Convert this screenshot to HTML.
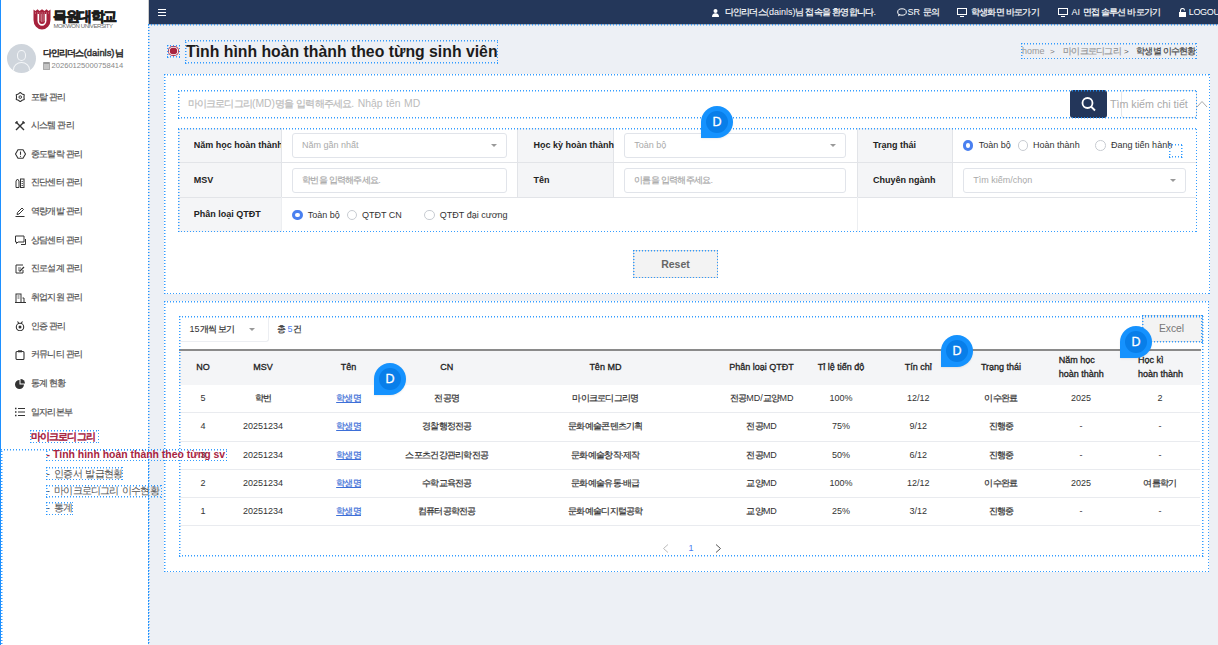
<!DOCTYPE html><html><head><meta charset="utf-8"><style>
*{box-sizing:border-box;margin:0;padding:0}
html,body{width:1218px;height:645px;overflow:hidden}
body{position:relative;background:#edf0f5;font-family:"Liberation Sans",sans-serif;color:#333}
div{position:absolute}
.t{white-space:nowrap}
.k{letter-spacing:-0.08em;-webkit-text-stroke-width:0.2px}
.nk .k{-webkit-text-stroke-width:0.05px}
.bk .k{-webkit-text-stroke-width:0.55px}
svg{display:block}
.db{pointer-events:none;z-index:5;
background:
 repeating-linear-gradient(90deg,rgba(30,146,255,0.9) 0 1.2px,transparent 1.2px 3px) left top/100% 1.5px no-repeat,
 repeating-linear-gradient(90deg,rgba(30,146,255,0.9) 0 1.2px,transparent 1.2px 3px) left bottom/100% 1.5px no-repeat,
 repeating-linear-gradient(0deg,rgba(30,146,255,0.9) 0 1.2px,transparent 1.2px 3px) left top/1.5px 100% no-repeat,
 repeating-linear-gradient(0deg,rgba(30,146,255,0.9) 0 1.2px,transparent 1.2px 3px) right top/1.5px 100% no-repeat;}
.badge{width:32px;height:32px;border-radius:16px 16px 16px 0;background:#1592fe;z-index:10;box-shadow:0 1px 2px rgba(0,0,0,.08)}
.badge::before{content:"";position:absolute;left:5px;top:5px;width:22px;height:22px;border-radius:50%;background:#087ee9}
.badge::after{content:"D";position:absolute;left:0;top:0;width:32px;height:32px;text-align:center;line-height:32px;color:#fff;font-size:12.5px;font-weight:400;-webkit-text-stroke:0.3px #fff}
</style></head><body><div style="left:0;top:0;width:148px;height:645px;background:#fff"></div>
<div style="left:0;top:0;width:1px;height:645px;background:#1e90ff;z-index:6"></div>
<div style="left:33px;top:9px;width:18px;height:21px">
<svg width="18" height="21" viewBox="0 0 18 21"><path d="M0.5 0.5 L2.5 2 L4.5 0.3 L6.5 2 L9 0.3 L11.5 2 L13.5 0.3 L15.5 2 L17.5 0.5 L17.5 11 A8.5 9.5 0 0 1 0.5 11 Z" fill="#a6213c"/>
<path d="M4.5 5 L4.5 11.5 A4.5 5.2 0 0 0 13.5 11.5 L13.5 5 L12 5 L12 11.5 A3 3.5 0 0 1 6 11.5 L6 5 Z" fill="#fff"/>
<path d="M7 5 v7 M8.5 5 v8 M10 5 v8 M11.3 5 v7" stroke="#fff" stroke-width="0.6" opacity=".6"/>
<path d="M2 4 h14" stroke="#fff" stroke-width="0.7" stroke-dasharray="1 1.2" opacity=".8"/>
</svg></div>
<div class="t " style="left:53.2px;top:8.00px;font-size:14px;line-height:16px;font-weight:700;color:#1d1d1d;letter-spacing:-1.55px;-webkit-text-stroke:0.7px #1d1d1d;">목원대학교</div>
<div class="t " style="left:53.5px;top:22.90px;font-size:6px;line-height:7px;font-weight:400;color:#666;letter-spacing:-0.4px;font-family:"Liberation Serif",serif;">MOKWON UNIVERSITY</div>
<div style="left:7px;top:44px;width:29px;height:29px;border-radius:50%;background:#cfd5dc;overflow:hidden"><div style="left:9.8px;top:6.2px;width:9.4px;height:10.6px;border-radius:50%;border:1.1px solid #f4f6f8"></div><div style="left:5.6px;top:17.8px;width:17.8px;height:16px;border-radius:50%;border:1.1px solid #f4f6f8"></div></div>
<div class="t bk" style="left:42.5px;top:45.80px;font-size:9.4px;line-height:13.4px;font-weight:400;color:#333;-webkit-text-stroke:0.45px #333;"><span class="k">다인리더스</span>(dainls)<span class="k">님</span></div>
<div style="left:42.5px;top:62px;width:7.5px;height:8px;background:#c4c4c4;border:0.8px solid #aaa;border-top:2px solid #999;border-radius:1px"></div>
<div class="t " style="left:51.5px;top:60.20px;font-size:7.6px;line-height:11.6px;font-weight:400;color:#888;">20260125000758414</div>
<div class="t " style="left:30.7px;top:90.50px;font-size:9px;line-height:13px;font-weight:400;color:#555;"><span class="k">포탈 관리</span></div>
<div class="ic" style="left:15px;top:92.0px;width:10px;height:10px"><svg width="11" height="10" viewBox="0 0 11 10"><path d="M5.25 0.50 L7.10 1.90 L9.23 2.80 L8.95 5.10 L9.23 7.40 L7.10 8.30 L5.25 9.70 L3.40 8.30 L1.27 7.40 L1.55 5.10 L1.27 2.80 L3.40 1.90Z" fill="none" stroke="#333" stroke-width="1.1" stroke-linejoin="round"/><circle cx="5.25" cy="5.1" r="1.3" fill="none" stroke="#333" stroke-width="1"/></svg></div>
<div class="t " style="left:30.7px;top:119.15px;font-size:9px;line-height:13px;font-weight:400;color:#555;"><span class="k">시스템 관리</span></div>
<div class="ic" style="left:15px;top:120.7px;width:10px;height:10px"><svg width="10" height="10" viewBox="0 0 10 10"><path d="M1 9 L9 1 M1 1 L9 9" stroke="#333" stroke-width="1.4"/><path d="M0.5 2.5 L2.5 .5" stroke="#333" stroke-width="1.6"/><path d="M7.5 .5 L9.5 2.5" stroke="#333" stroke-width="1.6"/></svg></div>
<div class="t " style="left:30.7px;top:147.80px;font-size:9px;line-height:13px;font-weight:400;color:#555;"><span class="k">중도탈락 관리</span></div>
<div class="ic" style="left:15px;top:149.3px;width:10px;height:10px"><svg width="11" height="10" viewBox="0 0 11 10"><path d="M3 .7 H8 L10.5 5 L8 9.3 H3 L.5 5Z" fill="none" stroke="#333" stroke-width="1.1"/><path d="M5.5 2.5 V5.8" stroke="#333" stroke-width="1.1"/><circle cx="5.5" cy="7.3" r=".6" fill="#333"/></svg></div>
<div class="t " style="left:30.7px;top:176.45px;font-size:9px;line-height:13px;font-weight:400;color:#555;"><span class="k">진단센터 관리</span></div>
<div class="ic" style="left:15px;top:177.9px;width:10px;height:10px"><svg width="10" height="10" viewBox="0 0 10 10"><path d="M1 3 L2.5 1 L4 3 V9.5 H1Z" fill="none" stroke="#333" stroke-width="1"/><rect x="5.5" y="1" width="3.5" height="8.5" fill="none" stroke="#333" stroke-width="1"/><path d="M6.5 3.5h1.5M6.5 5.5h1.5M6.5 7.5h1.5" stroke="#333" stroke-width=".8"/></svg></div>
<div class="t " style="left:30.7px;top:205.10px;font-size:9px;line-height:13px;font-weight:400;color:#555;"><span class="k">역량개발 관리</span></div>
<div class="ic" style="left:15px;top:206.6px;width:10px;height:10px"><svg width="10" height="10" viewBox="0 0 10 10"><path d="M2 7.5 L2.5 5.5 L7 1 L8.5 2.5 L4 7 Z" fill="none" stroke="#333" stroke-width="1"/><path d="M0.5 9.5 H9.5" stroke="#333" stroke-width="1"/></svg></div>
<div class="t " style="left:30.7px;top:233.75px;font-size:9px;line-height:13px;font-weight:400;color:#555;"><span class="k">상담센터 관리</span></div>
<div class="ic" style="left:15px;top:235.2px;width:10px;height:10px"><svg width="11" height="10" viewBox="0 0 11 10"><path d="M.5 1 H9 V7 H3 L1.5 8.5 V7 H.5Z" fill="none" stroke="#333" stroke-width="1"/><path d="M10.5 4 V9.5 H6" fill="none" stroke="#333" stroke-width="1"/></svg></div>
<div class="t " style="left:30.7px;top:262.40px;font-size:9px;line-height:13px;font-weight:400;color:#555;"><span class="k">진로설계 관리</span></div>
<div class="ic" style="left:15px;top:263.9px;width:10px;height:10px"><svg width="10" height="10" viewBox="0 0 10 10"><path d="M8 1 H1 V9 H8 V6" fill="none" stroke="#333" stroke-width="1"/><path d="M3 4 h3 M3 6 h2" stroke="#333" stroke-width=".8"/><path d="M4.5 7.5 L9 3" stroke="#333" stroke-width="1.2"/></svg></div>
<div class="t " style="left:30.7px;top:291.05px;font-size:9px;line-height:13px;font-weight:400;color:#555;"><span class="k">취업지원 관리</span></div>
<div class="ic" style="left:15px;top:292.5px;width:10px;height:10px"><svg width="11" height="10" viewBox="0 0 11 10"><rect x="1" y="1" width="5" height="8.5" fill="none" stroke="#333" stroke-width="1"/><path d="M2.5 3h2M2.5 5h2" stroke="#333" stroke-width=".8"/><path d="M7.5 5 h1.5 V9.5" fill="none" stroke="#333" stroke-width="1"/><path d="M0 9.5h11" stroke="#333" stroke-width="1"/></svg></div>
<div class="t " style="left:30.7px;top:319.70px;font-size:9px;line-height:13px;font-weight:400;color:#555;"><span class="k">인증 관리</span></div>
<div class="ic" style="left:15px;top:321.2px;width:10px;height:10px"><svg width="10" height="10" viewBox="0 0 10 10"><circle cx="5" cy="6" r="3.7" fill="none" stroke="#333" stroke-width="1.1"/><circle cx="5" cy="6" r="1.5" fill="#333"/><path d="M2.5 .5 L4 2.5 M7.5 .5 L6 2.5" stroke="#333" stroke-width="1.1"/></svg></div>
<div class="t " style="left:30.7px;top:348.35px;font-size:9px;line-height:13px;font-weight:400;color:#555;"><span class="k">커뮤니티 관리</span></div>
<div class="ic" style="left:15px;top:349.8px;width:10px;height:10px"><svg width="10" height="10" viewBox="0 0 10 10"><rect x="1" y="1.5" width="8" height="8" rx="1" fill="none" stroke="#333" stroke-width="1.1"/><rect x="3" y=".3" width="4" height="2" fill="#333"/></svg></div>
<div class="t " style="left:30.7px;top:377.00px;font-size:9px;line-height:13px;font-weight:400;color:#555;"><span class="k">통계 현황</span></div>
<div class="ic" style="left:15px;top:378.5px;width:10px;height:10px"><svg width="10" height="10" viewBox="0 0 10 10"><path d="M4.5 1 A4.5 4.5 0 1 0 9 5.5 H4.5Z" fill="#333"/><path d="M5.5 0 A4.5 4.5 0 0 1 10 4.5 H5.5Z" fill="#333"/></svg></div>
<div class="t " style="left:30.7px;top:405.65px;font-size:9px;line-height:13px;font-weight:400;color:#555;"><span class="k">일자리본부</span></div>
<div class="ic" style="left:15px;top:407.1px;width:10px;height:10px"><svg width="10" height="10" viewBox="0 0 10 10"><path d="M0 1.5h1.5M0 5h1.5M0 8.5h1.5" stroke="#333" stroke-width="1.3"/><path d="M3 1.5h7M3 5h7M3 8.5h7" stroke="#333" stroke-width="1.1"/></svg></div>
<div class="t bk" style="left:30.5px;top:429.50px;font-size:10px;line-height:14px;font-weight:400;color:#a8243f;"><span class="k">마이크로디그리</span></div>
<div class="db" style="left:30px;top:430px;width:69px;height:13px;"></div>
<div class="db" style="left:1px;top:449px;width:148px;height:210px;"></div>
<div class="t " style="left:46.5px;top:447.77px;font-size:10.45px;line-height:14.45px;font-weight:700;color:#a8243f;z-index:20;">- Tình hình hoàn thành theo từng sv</div>
<div class="db" style="left:46px;top:449px;width:181px;height:12px;"></div>
<div class="t nk" style="left:46.5px;top:466.65px;font-size:10.3px;line-height:14.3px;font-weight:400;color:#555;word-spacing:1.5px;">- <span class="k">인증서 발급현황</span></div>
<div class="db" style="left:46px;top:467.3px;width:77px;height:13px;"></div>
<div class="t nk" style="left:46.5px;top:484.15px;font-size:10.3px;line-height:14.3px;font-weight:400;color:#555;word-spacing:1.5px;">- <span class="k">마이크로디그리 이수현황</span></div>
<div class="db" style="left:46px;top:484.8px;width:116px;height:13px;"></div>
<div class="t nk" style="left:46.5px;top:501.35px;font-size:10.3px;line-height:14.3px;font-weight:400;color:#555;word-spacing:1.5px;">- <span class="k">통계</span></div>
<div class="db" style="left:46px;top:502.0px;width:27px;height:13px;"></div>
<div style="left:148px;top:0;width:1070px;height:24px;background:#24375a;border-left:1px solid #ccc"></div>
<div style="left:158px;top:9px;width:8px;height:7px;border-top:1.3px solid #fff;border-bottom:1.3px solid #fff"><div style="left:0;top:1.5px;width:8px;height:1.3px;background:#fff"></div></div>
<div style="left:148px;top:23.8px;width:1070px;height:1.2px;background:#aeb4bf"></div>
<div class="db" style="left:148px;top:24px;width:1080px;height:700px;"></div>
<div style="left:712px;top:8.5px;width:7px;height:8px"><svg width="7" height="8"><circle cx="3.5" cy="2" r="2" fill="#fff"/><path d="M0 8 Q0 4.3 3.5 4.3 Q7 4.3 7 8Z" fill="#fff"/></svg></div>
<div class="t " style="left:724.5px;top:5.80px;font-size:9px;line-height:13px;font-weight:400;color:#fff;"><span class="k">다인리더스</span>(dainls)<span class="k">님 접속을 환영합니다</span>.</div>
<div style="left:896.5px;top:8px;width:10px;height:9px"><svg width="10" height="9"><ellipse cx="5" cy="4" rx="4.3" ry="3.2" fill="none" stroke="#fff" stroke-width="1"/><path d="M1.5 6 L1 8.5 L3.5 6.8" fill="#fff"/></svg></div>
<div class="t " style="left:907.5px;top:5.80px;font-size:9px;line-height:13px;font-weight:400;color:#fff;">SR <span class="k">문의</span></div>
<div style="left:957px;top:8px;width:10px;height:9px"><svg width="10" height="9"><rect x="0.5" y="0.5" width="9" height="6" fill="none" stroke="#fff" stroke-width="1"/><path d="M3 8.5 h4" stroke="#fff" stroke-width="1"/></svg></div>
<div style="left:1058.3px;top:8px;width:10px;height:9px"><svg width="10" height="9"><rect x="0.5" y="0.5" width="9" height="6" fill="none" stroke="#fff" stroke-width="1"/><path d="M3 8.5 h4" stroke="#fff" stroke-width="1"/></svg></div>
<div class="t " style="left:970.9px;top:5.80px;font-size:9px;line-height:13px;font-weight:400;color:#fff;"><span class="k">학생화면 바로가기</span></div>
<div class="t " style="left:1071.5px;top:5.80px;font-size:9px;line-height:13px;font-weight:400;color:#fff;">AI <span class="k">면접 솔루션 바로가기</span></div>
<div style="left:1179px;top:7.5px;width:7px;height:9px"><svg width="7" height="9"><path d="M1.5 4 V2.5 A2 2 0 0 1 5.5 2.5" fill="none" stroke="#fff" stroke-width="1.1"/><rect x="0" y="4" width="7" height="5" fill="#fff"/></svg></div>
<div class="t " style="left:1188.7px;top:5.80px;font-size:9px;line-height:13px;font-weight:400;color:#fff;letter-spacing:-0.3px;">LOGOUT</div>
<div style="left:168.2px;top:46px;width:10.4px;height:10.4px;border-radius:50%;background:#a8243f;box-shadow:inset 0 0 0 0.9px #b03a52, inset 0 0 0 1.8px #fff"></div>
<div class="db" style="left:167px;top:45px;width:13px;height:12.5px;"></div>
<div class="t " style="left:186px;top:42.20px;font-size:15.8px;line-height:20px;font-weight:700;color:#1c1c1c;">Tình hình hoàn thành theo từng sinh viên</div>
<div class="db" style="left:185px;top:39.5px;width:313px;height:24px;"></div>
<div class="t " style="left:1022px;top:45.20px;font-size:9px;line-height:13px;font-weight:400;color:#999;">home</div>
<div class="t " style="left:1050px;top:45.70px;font-size:8px;line-height:12px;font-weight:400;color:#777;">&gt;</div>
<div class="t " style="left:1063px;top:45.20px;font-size:9px;line-height:13px;font-weight:400;color:#999;"><span class="k">마이크로디그리</span></div>
<div class="t " style="left:1124px;top:45.70px;font-size:8px;line-height:12px;font-weight:400;color:#555;">&gt;</div>
<div class="t " style="left:1136px;top:45.20px;font-size:9px;line-height:13px;font-weight:400;color:#444;"><span class="k">학생별 이수현황</span></div>
<div class="db" style="left:1021px;top:43px;width:176px;height:16px;"></div>
<div style="left:164px;top:74px;width:1046px;height:220px;background:#fff"></div>
<div class="db" style="left:164px;top:74px;width:1046px;height:220px;"></div>
<div class="db" style="left:178px;top:89.5px;width:1019px;height:29px;"></div>
<div class="t " style="left:187.8px;top:96.80px;font-size:10.4px;line-height:14.4px;font-weight:400;color:#bbb;word-spacing:0.7px;"><span class="k">마이크로디그리</span>(MD)<span class="k">명을 입력해주세요</span>. Nhập tên MD</div>
<div style="left:1070px;top:90px;width:37px;height:28px;background:#23365a;border-radius:3px"><svg width="37" height="28"><circle cx="17.5" cy="13" r="5" fill="none" stroke="#fff" stroke-width="1.8"/><path d="M21 16.5 L25 20.5" stroke="#fff" stroke-width="1.8"/></svg></div>
<div style="left:1120.5px;top:90px;width:76px;height:28px;border:1px solid #e3e6ea;border-radius:3px;background:#fff"></div>
<div class="t " style="left:1110px;top:97.00px;font-size:10.7px;line-height:14px;font-weight:400;color:#aaa;">Tìm kiếm chi tiết</div>
<div style="left:1196px;top:100px;width:12px;height:8px"><svg width="12" height="8"><path d="M1 7 L6 1.5 L11 7" fill="none" stroke="#aaa" stroke-width="1"/></svg></div>
<div style="left:178px;top:128px;width:1018px;height:103.6px;background:#fff"></div>
<div style="left:178px;top:128px;width:103.60000000000002px;height:34.5px;background:#f4f5f7"></div>
<div style="left:517.2px;top:128px;width:96.19999999999993px;height:34.5px;background:#f4f5f7"></div>
<div style="left:857.6px;top:128px;width:94.89999999999998px;height:34.5px;background:#f4f5f7"></div>
<div style="left:178px;top:162.5px;width:103.60000000000002px;height:34.69999999999999px;background:#f4f5f7"></div>
<div style="left:517.2px;top:162.5px;width:96.19999999999993px;height:34.69999999999999px;background:#f4f5f7"></div>
<div style="left:857.6px;top:162.5px;width:94.89999999999998px;height:34.69999999999999px;background:#f4f5f7"></div>
<div style="left:178px;top:197.2px;width:103.60000000000002px;height:34.400000000000006px;background:#f4f5f7"></div>
<div style="left:178px;top:162.0px;width:1018px;height:1px;background:#e2e4e8"></div>
<div style="left:178px;top:196.7px;width:1018px;height:1px;background:#e2e4e8"></div>
<div style="left:281.1px;top:128px;width:1px;height:69.19999999999999px;background:#e2e4e8"></div>
<div style="left:516.7px;top:128px;width:1px;height:69.19999999999999px;background:#e2e4e8"></div>
<div style="left:612.9px;top:128px;width:1px;height:69.19999999999999px;background:#e2e4e8"></div>
<div style="left:857.1px;top:128px;width:1px;height:69.19999999999999px;background:#e2e4e8"></div>
<div style="left:952.0px;top:128px;width:1px;height:69.19999999999999px;background:#e2e4e8"></div>
<div style="left:281.1px;top:197.2px;width:1px;height:34.400000000000006px;background:#eceef1"></div>
<div style="left:857.1px;top:197.2px;width:1px;height:34.400000000000006px;background:#eceef1"></div>
<div class="db" style="left:178px;top:127.5px;width:1019px;height:104.5px;"></div>
<div class="t " style="left:193.8px;top:138.50px;font-size:9px;line-height:13px;font-weight:700;color:#222;width:87px;overflow:hidden;">Năm học hoàn thành</div>
<div class="t " style="left:193.8px;top:173.50px;font-size:9px;line-height:13px;font-weight:700;color:#222;">MSV</div>
<div class="t " style="left:193.8px;top:208.00px;font-size:9px;line-height:13px;font-weight:700;color:#222;">Phân loại QTĐT</div>
<div class="t " style="left:533.6px;top:138.50px;font-size:9px;line-height:13px;font-weight:700;color:#222;">Học kỳ hoàn thành</div>
<div class="t " style="left:533.6px;top:173.50px;font-size:9px;line-height:13px;font-weight:700;color:#222;">Tên</div>
<div class="t " style="left:873px;top:138.50px;font-size:9px;line-height:13px;font-weight:700;color:#222;">Trạng thái</div>
<div class="t " style="left:873px;top:173.50px;font-size:9px;line-height:13px;font-weight:700;color:#222;">Chuyên ngành</div>
<div style="left:292px;top:132.6px;width:215px;height:25px;border:1px solid #e1e4ea;border-radius:3px;background:#fff"></div>
<div class="t " style="left:302px;top:138.90px;font-size:9px;line-height:13px;font-weight:400;color:#aaa;">Năm gần nhất</div>
<div style="left:491px;top:144.1px;width:0;height:0;border-left:3.5px solid transparent;border-right:3.5px solid transparent;border-top:3.5px solid #999"></div>
<div style="left:624.2px;top:132.6px;width:222.19999999999993px;height:25px;border:1px solid #e1e4ea;border-radius:3px;background:#fff"></div>
<div class="t " style="left:634.2px;top:138.90px;font-size:9px;line-height:13px;font-weight:400;color:#aaa;">Toàn bộ</div>
<div style="left:830.4px;top:144.1px;width:0;height:0;border-left:3.5px solid transparent;border-right:3.5px solid transparent;border-top:3.5px solid #999"></div>
<div style="left:292px;top:167.5px;width:215px;height:25px;border:1px solid #e1e4ea;border-radius:3px;background:#fff"></div>
<div class="t " style="left:302px;top:173.80px;font-size:9px;line-height:13px;font-weight:400;color:#aaa;letter-spacing:-0.8px;"><span class="k">학번을 입력해주세요</span>.</div>
<div style="left:624.2px;top:167.5px;width:222.19999999999993px;height:25px;border:1px solid #e1e4ea;border-radius:3px;background:#fff"></div>
<div class="t " style="left:634.2px;top:173.80px;font-size:9px;line-height:13px;font-weight:400;color:#aaa;letter-spacing:-0.8px;"><span class="k">이름을 입력해주세요</span>.</div>
<div style="left:963.3px;top:167.5px;width:222.29999999999995px;height:25px;border:1px solid #e1e4ea;border-radius:3px;background:#fff"></div>
<div class="t " style="left:973.3px;top:173.80px;font-size:9px;line-height:13px;font-weight:400;color:#aaa;">Tìm kiếm/chọn</div>
<div style="left:1169.6px;top:179.0px;width:0;height:0;border-left:3.5px solid transparent;border-right:3.5px solid transparent;border-top:3.5px solid #999"></div>
<div style="left:292px;top:209.89999999999998px;width:10.6px;height:10.6px;border-radius:50%;border:3px solid #4a80f0;background:#fff"></div>
<div class="t " style="left:307.8px;top:208.70px;font-size:9px;line-height:13px;font-weight:400;color:#333;">Toàn bộ</div>
<div style="left:346.5px;top:209.89999999999998px;width:10.6px;height:10.6px;border-radius:50%;border:1px solid #c8ccd2;background:#fff"></div>
<div class="t " style="left:362px;top:208.70px;font-size:9px;line-height:13px;font-weight:400;color:#333;">QTĐT CN</div>
<div style="left:424.4px;top:209.89999999999998px;width:10.6px;height:10.6px;border-radius:50%;border:1px solid #c8ccd2;background:#fff"></div>
<div class="t " style="left:439.8px;top:208.70px;font-size:9px;line-height:13px;font-weight:400;color:#333;">QTĐT đại cương</div>
<div style="left:962.7px;top:140.1px;width:10.6px;height:10.6px;border-radius:50%;border:3px solid #4a80f0;background:#fff"></div>
<div class="t " style="left:978.7px;top:138.90px;font-size:9px;line-height:13px;font-weight:400;color:#333;">Toàn bộ</div>
<div style="left:1017.7px;top:140.1px;width:10.6px;height:10.6px;border-radius:50%;border:1px solid #c8ccd2;background:#fff"></div>
<div class="t " style="left:1033.1px;top:138.90px;font-size:9px;line-height:13px;font-weight:400;color:#333;">Hoàn thành</div>
<div style="left:1095.1px;top:140.1px;width:10.6px;height:10.6px;border-radius:50%;border:1px solid #c8ccd2;background:#fff"></div>
<div class="t " style="left:1111.1px;top:138.90px;font-size:9px;line-height:13px;font-weight:400;color:#333;">Đang tiến hành</div>
<div class="db" style="left:1168.5px;top:143.7px;width:14px;height:14px;"></div>
<div style="left:633px;top:250px;width:85px;height:28px;background:#f3f3f3;border:1px solid #ddd;border-radius:2px"></div>
<div class="t " style="left:575.50px;top:257.25px;font-size:10.5px;line-height:14.5px;font-weight:700;color:#666;width:200px;text-align:center;">Reset</div>
<div class="db" style="left:633px;top:250px;width:85px;height:28px;"></div>
<div style="left:164px;top:301px;width:1045px;height:271px;background:#fff"></div>
<div class="db" style="left:164px;top:301px;width:1045px;height:271px;"></div>
<div class="db" style="left:178.5px;top:316px;width:1025px;height:240.5px;"></div>
<div style="left:178.5px;top:316px;width:90px;height:25.5px;border:1px solid #eceef2;border-top:none;border-left:none;border-radius:0 0 3px 0"></div>
<div class="t " style="left:189.5px;top:322.50px;font-size:9px;line-height:13px;font-weight:400;color:#333;">15<span class="k">개씩 보기</span></div>
<div style="left:248.5px;top:327.5px;width:0;height:0;border-left:3.5px solid transparent;border-right:3.5px solid transparent;border-top:3.5px solid #999"></div>
<div class="t " style="left:276.5px;top:322.50px;font-size:9px;line-height:13px;font-weight:400;color:#333;"><span class="k">총</span></div>
<div class="t " style="left:287.5px;top:322.50px;font-size:9px;line-height:13px;font-weight:400;color:#4a80f0;">5</div>
<div class="t " style="left:292.8px;top:322.50px;font-size:9px;line-height:13px;font-weight:400;color:#333;"><span class="k">건</span></div>
<div style="left:1141.5px;top:315px;width:61px;height:27px;background:#f3f3f3;border:1px solid #e0e0e0"></div>
<div class="t " style="left:1071.50px;top:322.45px;font-size:10.3px;line-height:14.3px;font-weight:400;color:#777;width:200px;text-align:center;">Excel</div>
<div class="db" style="left:1141.5px;top:315px;width:61px;height:27.5px;"></div>
<div style="left:178.5px;top:349px;width:1022px;height:1.5px;background:#8a8a8a"></div>
<div style="left:178.5px;top:350.5px;width:1022px;height:34px;background:#f4f5f7"></div>
<div class="t " style="left:103.00px;top:361.20px;font-size:9px;line-height:13px;font-weight:400;color:#222;width:200px;text-align:center;-webkit-text-stroke:0.3px #222;">NO</div>
<div class="t " style="left:163.00px;top:361.20px;font-size:9px;line-height:13px;font-weight:400;color:#222;width:200px;text-align:center;-webkit-text-stroke:0.3px #222;">MSV</div>
<div class="t " style="left:248.60px;top:361.20px;font-size:9px;line-height:13px;font-weight:400;color:#222;width:200px;text-align:center;-webkit-text-stroke:0.3px #222;">Tên</div>
<div class="t " style="left:346.80px;top:361.20px;font-size:9px;line-height:13px;font-weight:400;color:#222;width:200px;text-align:center;-webkit-text-stroke:0.3px #222;">CN</div>
<div class="t " style="left:505.40px;top:361.20px;font-size:9px;line-height:13px;font-weight:400;color:#222;width:200px;text-align:center;-webkit-text-stroke:0.3px #222;">Tên MD</div>
<div class="t " style="left:661.60px;top:361.20px;font-size:9px;line-height:13px;font-weight:400;color:#222;width:200px;text-align:center;-webkit-text-stroke:0.3px #222;">Phân loại QTĐT</div>
<div class="t " style="left:741.10px;top:361.20px;font-size:9px;line-height:13px;font-weight:400;color:#222;width:200px;text-align:center;-webkit-text-stroke:0.3px #222;">Tỉ lệ tiến độ</div>
<div class="t " style="left:818.30px;top:361.20px;font-size:9px;line-height:13px;font-weight:400;color:#222;width:200px;text-align:center;-webkit-text-stroke:0.3px #222;">Tín chỉ</div>
<div class="t " style="left:901.00px;top:361.20px;font-size:9px;line-height:13px;font-weight:400;color:#222;width:200px;text-align:center;-webkit-text-stroke:0.3px #222;">Trạng thái</div>
<div class="t " style="left:1058.7px;top:353.70px;font-size:9px;line-height:13px;font-weight:400;color:#222;-webkit-text-stroke:0.3px #222;">Năm học</div>
<div class="t " style="left:1058.7px;top:368.30px;font-size:9px;line-height:13px;font-weight:400;color:#222;-webkit-text-stroke:0.3px #222;">hoàn thành</div>
<div class="t " style="left:1138px;top:353.70px;font-size:9px;line-height:13px;font-weight:400;color:#222;-webkit-text-stroke:0.3px #222;">Học kì</div>
<div class="t " style="left:1138px;top:368.30px;font-size:9px;line-height:13px;font-weight:400;color:#222;-webkit-text-stroke:0.3px #222;">hoàn thành</div>
<div class="t " style="left:103.00px;top:392.00px;font-size:9px;line-height:13px;font-weight:400;color:#333;width:200px;text-align:center;">5</div>
<div class="t " style="left:163.00px;top:392.00px;font-size:9px;line-height:13px;font-weight:400;color:#333;width:200px;text-align:center;"><span class="k">학번</span></div>
<div class="t " style="left:248.60px;top:392.00px;font-size:9px;line-height:13px;font-weight:400;color:#3d6fd8;width:200px;text-align:center;text-decoration:underline;"><span class="k">학생명</span></div>
<div class="t " style="left:346.80px;top:392.00px;font-size:9px;line-height:13px;font-weight:400;color:#333;width:200px;text-align:center;"><span class="k">전공명</span></div>
<div class="t " style="left:505.40px;top:392.00px;font-size:9px;line-height:13px;font-weight:400;color:#333;width:200px;text-align:center;"><span class="k">마이크로디그리명</span></div>
<div class="t " style="left:661.60px;top:392.00px;font-size:9px;line-height:13px;font-weight:400;color:#333;width:200px;text-align:center;"><span class="k">전공</span>MD/<span class="k">교양</span>MD</div>
<div class="t " style="left:741.10px;top:392.00px;font-size:9px;line-height:13px;font-weight:400;color:#333;width:200px;text-align:center;">100%</div>
<div class="t " style="left:818.30px;top:392.00px;font-size:9px;line-height:13px;font-weight:400;color:#333;width:200px;text-align:center;">12/12</div>
<div class="t " style="left:901.00px;top:392.00px;font-size:9px;line-height:13px;font-weight:400;color:#333;width:200px;text-align:center;"><span class="k">이수완료</span></div>
<div class="t " style="left:981.00px;top:392.00px;font-size:9px;line-height:13px;font-weight:400;color:#333;width:200px;text-align:center;">2025</div>
<div class="t " style="left:1060.00px;top:392.00px;font-size:9px;line-height:13px;font-weight:400;color:#333;width:200px;text-align:center;">2</div>
<div style="left:178.5px;top:412.1px;width:1021px;height:1px;background:#e9ebef"></div>
<div class="t " style="left:103.00px;top:420.30px;font-size:9px;line-height:13px;font-weight:400;color:#333;width:200px;text-align:center;">4</div>
<div class="t " style="left:163.00px;top:420.30px;font-size:9px;line-height:13px;font-weight:400;color:#333;width:200px;text-align:center;">20251234</div>
<div class="t " style="left:248.60px;top:420.30px;font-size:9px;line-height:13px;font-weight:400;color:#3d6fd8;width:200px;text-align:center;text-decoration:underline;"><span class="k">학생명</span></div>
<div class="t " style="left:346.80px;top:420.30px;font-size:9px;line-height:13px;font-weight:400;color:#333;width:200px;text-align:center;"><span class="k">경찰행정전공</span></div>
<div class="t " style="left:505.40px;top:420.30px;font-size:9px;line-height:13px;font-weight:400;color:#333;width:200px;text-align:center;"><span class="k">문화예술콘텐츠기획</span></div>
<div class="t " style="left:661.60px;top:420.30px;font-size:9px;line-height:13px;font-weight:400;color:#333;width:200px;text-align:center;"><span class="k">전공</span>MD</div>
<div class="t " style="left:741.10px;top:420.30px;font-size:9px;line-height:13px;font-weight:400;color:#333;width:200px;text-align:center;">75%</div>
<div class="t " style="left:818.30px;top:420.30px;font-size:9px;line-height:13px;font-weight:400;color:#333;width:200px;text-align:center;">9/12</div>
<div class="t " style="left:901.00px;top:420.30px;font-size:9px;line-height:13px;font-weight:400;color:#333;width:200px;text-align:center;"><span class="k">진행중</span></div>
<div class="t " style="left:981.00px;top:420.30px;font-size:9px;line-height:13px;font-weight:400;color:#333;width:200px;text-align:center;">-</div>
<div class="t " style="left:1060.00px;top:420.30px;font-size:9px;line-height:13px;font-weight:400;color:#333;width:200px;text-align:center;">-</div>
<div style="left:178.5px;top:440.5px;width:1021px;height:1px;background:#e9ebef"></div>
<div class="t " style="left:103.00px;top:448.70px;font-size:9px;line-height:13px;font-weight:400;color:#333;width:200px;text-align:center;">3</div>
<div class="t " style="left:163.00px;top:448.70px;font-size:9px;line-height:13px;font-weight:400;color:#333;width:200px;text-align:center;">20251234</div>
<div class="t " style="left:248.60px;top:448.70px;font-size:9px;line-height:13px;font-weight:400;color:#3d6fd8;width:200px;text-align:center;text-decoration:underline;"><span class="k">학생명</span></div>
<div class="t " style="left:346.80px;top:448.70px;font-size:9px;line-height:13px;font-weight:400;color:#333;width:200px;text-align:center;"><span class="k">스포츠건강관리학전공</span></div>
<div class="t " style="left:505.40px;top:448.70px;font-size:9px;line-height:13px;font-weight:400;color:#333;width:200px;text-align:center;"><span class="k">문화예술창작·제작</span></div>
<div class="t " style="left:661.60px;top:448.70px;font-size:9px;line-height:13px;font-weight:400;color:#333;width:200px;text-align:center;"><span class="k">전공</span>MD</div>
<div class="t " style="left:741.10px;top:448.70px;font-size:9px;line-height:13px;font-weight:400;color:#333;width:200px;text-align:center;">50%</div>
<div class="t " style="left:818.30px;top:448.70px;font-size:9px;line-height:13px;font-weight:400;color:#333;width:200px;text-align:center;">6/12</div>
<div class="t " style="left:901.00px;top:448.70px;font-size:9px;line-height:13px;font-weight:400;color:#333;width:200px;text-align:center;"><span class="k">진행중</span></div>
<div class="t " style="left:981.00px;top:448.70px;font-size:9px;line-height:13px;font-weight:400;color:#333;width:200px;text-align:center;">-</div>
<div class="t " style="left:1060.00px;top:448.70px;font-size:9px;line-height:13px;font-weight:400;color:#333;width:200px;text-align:center;">-</div>
<div style="left:178.5px;top:468.9px;width:1021px;height:1px;background:#e9ebef"></div>
<div class="t " style="left:103.00px;top:476.90px;font-size:9px;line-height:13px;font-weight:400;color:#333;width:200px;text-align:center;">2</div>
<div class="t " style="left:163.00px;top:476.90px;font-size:9px;line-height:13px;font-weight:400;color:#333;width:200px;text-align:center;">20251234</div>
<div class="t " style="left:248.60px;top:476.90px;font-size:9px;line-height:13px;font-weight:400;color:#3d6fd8;width:200px;text-align:center;text-decoration:underline;"><span class="k">학생명</span></div>
<div class="t " style="left:346.80px;top:476.90px;font-size:9px;line-height:13px;font-weight:400;color:#333;width:200px;text-align:center;"><span class="k">수학교육전공</span></div>
<div class="t " style="left:505.40px;top:476.90px;font-size:9px;line-height:13px;font-weight:400;color:#333;width:200px;text-align:center;"><span class="k">문화예술유통·배급</span></div>
<div class="t " style="left:661.60px;top:476.90px;font-size:9px;line-height:13px;font-weight:400;color:#333;width:200px;text-align:center;"><span class="k">교양</span>MD</div>
<div class="t " style="left:741.10px;top:476.90px;font-size:9px;line-height:13px;font-weight:400;color:#333;width:200px;text-align:center;">100%</div>
<div class="t " style="left:818.30px;top:476.90px;font-size:9px;line-height:13px;font-weight:400;color:#333;width:200px;text-align:center;">12/12</div>
<div class="t " style="left:901.00px;top:476.90px;font-size:9px;line-height:13px;font-weight:400;color:#333;width:200px;text-align:center;"><span class="k">이수완료</span></div>
<div class="t " style="left:981.00px;top:476.90px;font-size:9px;line-height:13px;font-weight:400;color:#333;width:200px;text-align:center;">2025</div>
<div class="t " style="left:1060.00px;top:476.90px;font-size:9px;line-height:13px;font-weight:400;color:#333;width:200px;text-align:center;"><span class="k">여름학기</span></div>
<div style="left:178.5px;top:497.1px;width:1021px;height:1px;background:#e9ebef"></div>
<div class="t " style="left:103.00px;top:505.30px;font-size:9px;line-height:13px;font-weight:400;color:#333;width:200px;text-align:center;">1</div>
<div class="t " style="left:163.00px;top:505.30px;font-size:9px;line-height:13px;font-weight:400;color:#333;width:200px;text-align:center;">20251234</div>
<div class="t " style="left:248.60px;top:505.30px;font-size:9px;line-height:13px;font-weight:400;color:#3d6fd8;width:200px;text-align:center;text-decoration:underline;"><span class="k">학생명</span></div>
<div class="t " style="left:346.80px;top:505.30px;font-size:9px;line-height:13px;font-weight:400;color:#333;width:200px;text-align:center;"><span class="k">컴퓨터공학전공</span></div>
<div class="t " style="left:505.40px;top:505.30px;font-size:9px;line-height:13px;font-weight:400;color:#333;width:200px;text-align:center;"><span class="k">문화예술디지털공학</span></div>
<div class="t " style="left:661.60px;top:505.30px;font-size:9px;line-height:13px;font-weight:400;color:#333;width:200px;text-align:center;"><span class="k">교양</span>MD</div>
<div class="t " style="left:741.10px;top:505.30px;font-size:9px;line-height:13px;font-weight:400;color:#333;width:200px;text-align:center;">25%</div>
<div class="t " style="left:818.30px;top:505.30px;font-size:9px;line-height:13px;font-weight:400;color:#333;width:200px;text-align:center;">3/12</div>
<div class="t " style="left:901.00px;top:505.30px;font-size:9px;line-height:13px;font-weight:400;color:#333;width:200px;text-align:center;"><span class="k">진행중</span></div>
<div class="t " style="left:981.00px;top:505.30px;font-size:9px;line-height:13px;font-weight:400;color:#333;width:200px;text-align:center;">-</div>
<div class="t " style="left:1060.00px;top:505.30px;font-size:9px;line-height:13px;font-weight:400;color:#333;width:200px;text-align:center;">-</div>
<div style="left:178.5px;top:525.0px;width:1021px;height:1px;background:#e9ebef"></div>
<div style="left:661.5px;top:543.5px;width:7px;height:9px"><svg width="7" height="9"><path d="M6 0.5 L1.5 4.5 L6 8.5" fill="none" stroke="#bbb" stroke-width="1"/></svg></div>
<div class="t " style="left:681.00px;top:541.50px;font-size:9px;line-height:13px;font-weight:400;color:#4a80f0;width:20px;text-align:center;">1</div>
<div style="left:714.5px;top:543.5px;width:7px;height:9px"><svg width="7" height="9"><path d="M1 0.5 L5.5 4.5 L1 8.5" fill="none" stroke="#555" stroke-width="1"/></svg></div>
<div class="badge" style="left:701px;top:106px"></div>
<div class="badge" style="left:374px;top:363px"></div>
<div class="badge" style="left:941px;top:334.5px"></div>
<div class="badge" style="left:1120px;top:326px"></div>
<div class="db" style="left:148px;top:24px;width:1px;height:700px;"></div></body></html>
